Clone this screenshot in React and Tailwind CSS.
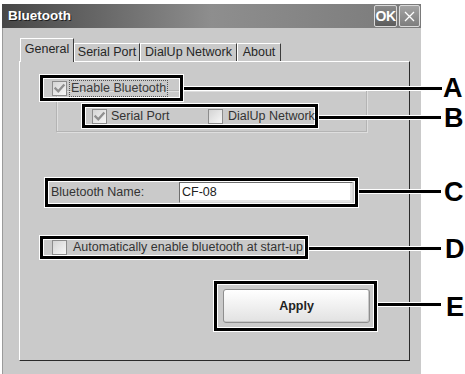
import React from "react";

const FONT = { fontFamily: '"Liberation Sans", Arial, sans-serif' };

function Check({ checked }) {
  return (
    <span className="w-[15px] h-[15px] shrink-0 border border-[#8c8c8c] bg-gradient-to-br from-[#d4d4d4] to-[#f7f7f7] flex items-center justify-center">
      {checked && (
        <svg width="13" height="13" viewBox="0 0 13 13">
          <path d="M2.5 6.5 L5.3 9.3 L10.6 3.4" fill="none" stroke="#8f8f8f" strokeWidth="2.3" strokeLinecap="square" />
        </svg>
      )}
    </span>
  );
}

const callout =
  "relative z-10 border-[3px] border-black shadow-[0_0_0_1px_#ffffff,inset_0_0_0_1px_#ffffff]";

function Tab({ w, active, children }) {
  return (
    <div
      className={
        "flex items-center justify-center border-l border-t border-r border-l-white border-t-white border-r-[#3c3c3c] bg-[#cacaca] text-[12.5px] text-[#262626] " +
        (active ? "h-[24px] relative z-10 -mb-[1px] pb-[2px]" : "h-[18px]")
      }
      style={{ width: w }}
    >
      {children}
    </div>
  );
}

export default function App() {
  return (
    <div className="relative w-[465px] h-[374px] bg-white overflow-hidden" style={FONT}>
      <div className="flex">
        {/* window */}
        <div className="ml-[2px] mt-[4px] w-[419px] h-[370px] flex flex-col bg-[#cacaca]">
          {/* title bar */}
          <div className="h-[24px] flex items-center justify-between pl-[6px] pr-[1px] bg-gradient-to-r from-[#474747] via-[#8e8e8e] to-[#7a7a7a]">
            <span className="text-white font-bold text-[13.5px] [text-shadow:1px_1px_0_#1e1e1e]">Bluetooth</span>
            <div className="flex items-center gap-[2px]">
              <div className="w-[23px] h-[22px] border border-[#dadada] rounded-[2px] bg-gradient-to-b from-[#8a8a8a] to-[#5c5c5c] flex items-center justify-center text-white font-bold text-[14px] leading-none tracking-[-0.5px]">
                OK
              </div>
              <div className="w-[21px] h-[22px] border border-[#dadada] rounded-[2px] bg-gradient-to-b from-[#a3a3a3] to-[#7e7e7e] flex items-center justify-center">
                <svg width="11" height="11" viewBox="0 0 11 11">
                  <path d="M1 1 L10 10 M10 1 L1 10" stroke="#ffffff" strokeWidth="1.3" />
                </svg>
              </div>
            </div>
          </div>
          {/* body */}
          <div className="flex-1 pl-[16px] pt-[11px] border-l border-[#9a9a9a]">
            <div className="flex items-end ml-[1px] h-[22px]">
              <Tab w={54} active>General</Tab>
              <Tab w={66}>Serial Port</Tab>
              <Tab w={97}>DialUp Network</Tab>
              <Tab w={44}>About</Tab>
            </div>
            {/* panel */}
            <div className="w-[391px] h-[300px] border border-l-white border-t-white border-r-[#2a2a2a] border-b-[#2a2a2a] flex flex-col items-start text-[12.5px] text-[#333]">
              {/* A */}
              <div className={callout + " ml-[20px] mt-[13px] w-[143px] h-[26px] flex items-center pl-[9px]"}>
                <Check checked />
                <span className="ml-[2px] border border-dotted border-[#555] px-[1px] leading-[15px] text-[#3a3a3a]">
                  Enable Bluetooth
                </span>
              </div>
              {/* group box */}
              <div className="ml-[36px] -mt-[11px] w-[311px] h-[42px] border border-[#b4b4b4] shadow-[inset_1px_1px_0_#dedede,1px_1px_0_#dedede] flex items-start">
                <div className={callout + " ml-[25px] mt-[13px] w-[236px] h-[24px] flex items-center pl-[7px]"}>
                  <Check checked />
                  <span className="ml-[4px] w-[97px]">Serial Port</span>
                  <Check />
                  <span className="ml-[5px]">DialUp Network</span>
                </div>
              </div>
              {/* C */}
              <div className={callout + " ml-[25px] mt-[46px] w-[313px] h-[29px] flex items-center pl-[3px]"}>
                <span className="w-[128px]">Bluetooth Name:</span>
                <div className="w-[174px] h-[21px] bg-white border border-t-[#6e6e6e] border-l-[#6e6e6e] border-r-[#d8d8d8] border-b-[#d8d8d8] shadow-[inset_-2px_-2px_0_#e4e4e4] flex items-center pl-[2px] text-[#222]">
                  CF-08
                </div>
              </div>
              {/* D */}
              <div className={callout + " ml-[20px] mt-[29px] w-[268px] h-[23px] flex items-center pl-[9px]"}>
                <Check />
                <span className="ml-[6px]">Automatically enable bluetooth at start-up</span>
              </div>
              {/* E */}
              <div className={callout + " ml-[194px] mt-[22px] w-[163px] h-[50px] flex items-center pl-[6px]"}>
                <div className="w-[147px] h-[34px] rounded-[3px] border border-[#8e8e8e] bg-gradient-to-b from-[#ffffff] to-[#e2e2e2] shadow-[inset_-1px_-1px_0_#c8c8c8] flex items-center justify-center font-bold text-[12.5px] text-[#222]">
                  Apply
                </div>
              </div>
            </div>
          </div>
        </div>
      </div>

      {/* callout leader lines (annotation overlay) */}
      <div className="absolute left-[182px] top-[87px] w-[260px] h-[3px] bg-black shadow-[0_0_0_1px_#ffffff]" />
      <div className="absolute left-[317px] top-[116px] w-[124px] h-[3px] bg-black shadow-[0_0_0_1px_#ffffff]" />
      <div className="absolute left-[357px] top-[190px] w-[84px] h-[3px] bg-black shadow-[0_0_0_1px_#ffffff]" />
      <div className="absolute left-[307px] top-[247px] w-[134px] h-[3px] bg-black shadow-[0_0_0_1px_#ffffff]" />
      <div className="absolute left-[376px] top-[303px] w-[65px] h-[3px] bg-black shadow-[0_0_0_1px_#ffffff]" />

      {/* callout letters */}
      <div className="absolute left-[443px] top-[75px] h-[27px] leading-none text-[27px] font-bold text-black">A</div>
      <div className="absolute left-[444px] top-[105px] h-[27px] leading-none text-[27px] font-bold text-black">B</div>
      <div className="absolute left-[444px] top-[179px] h-[27px] leading-none text-[27px] font-bold text-black">C</div>
      <div className="absolute left-[445px] top-[236px] h-[27px] leading-none text-[27px] font-bold text-black">D</div>
      <div className="absolute left-[446px] top-[294px] h-[27px] leading-none text-[27px] font-bold text-black">E</div>
    </div>
  );
}
